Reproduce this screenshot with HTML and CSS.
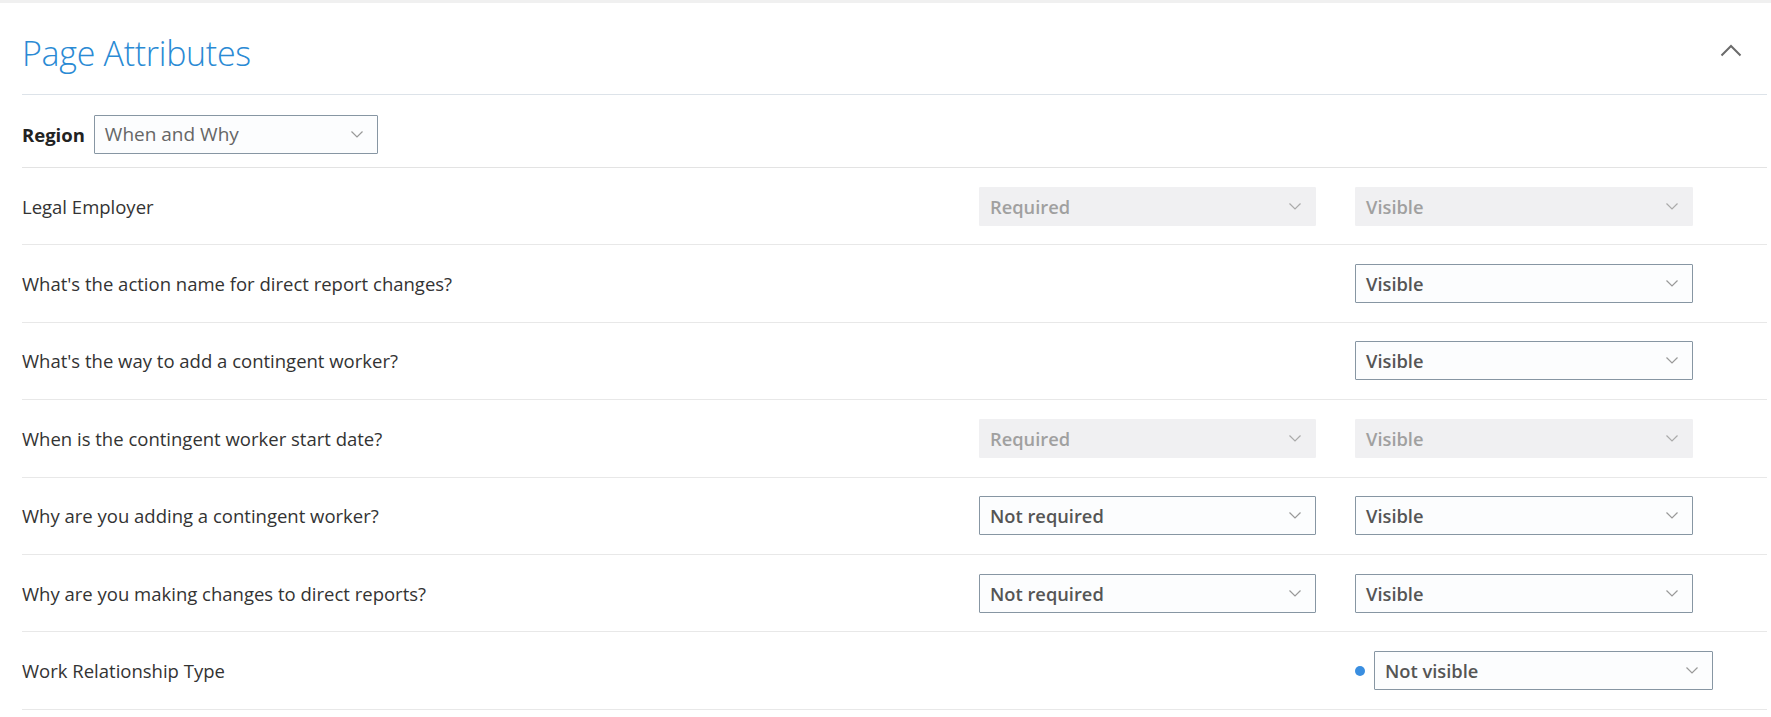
FILE: index.html
```html
<!DOCTYPE html>
<html lang="en">
<head>
  <meta charset="UTF-8">
  <meta name="viewport" content="width=device-width, initial-scale=1.0">
  <title>Page Attributes</title>
  <link rel="stylesheet" href="styles.css">
</head>
<body>
  <div class="topbar"></div>
  <div class="panel">
    <div class="panel-header">
      <h2>Page Attributes</h2>
      <button class="collapse" title="Collapse">
        <svg width="22" height="13" viewBox="0 0 22 13"><path d="M1.5 11.5 L11 2 L20.5 11.5" fill="none" stroke="#6b6b6b" stroke-width="2"/></svg>
      </button>
    </div>

    <div class="region-bar">
      <span class="region-label">Region</span>
      <div class="select region-select">
        <span>When and Why</span>
        <svg class="chev" width="12" height="7" viewBox="0 0 12 7"><path d="M0.5 0.5 L6 6 L11.5 0.5" fill="none" stroke="#999" stroke-width="1.2"/></svg>
      </div>
    </div>

    <div class="attr-row">
      <span class="attr-name">Legal Employer</span>
      <div class="select disabled"><span>Required</span><svg class="chev" width="12" height="7" viewBox="0 0 12 7"><path d="M0.5 0.5 L6 6 L11.5 0.5" fill="none" stroke="#aaa" stroke-width="1.2"/></svg></div>
      <div class="select disabled"><span>Visible</span><svg class="chev" width="12" height="7" viewBox="0 0 12 7"><path d="M0.5 0.5 L6 6 L11.5 0.5" fill="none" stroke="#aaa" stroke-width="1.2"/></svg></div>
    </div>

    <div class="attr-row">
      <span class="attr-name">What's the action name for direct report changes?</span>
      <div class="empty"></div>
      <div class="select"><span>Visible</span><svg class="chev" width="12" height="7" viewBox="0 0 12 7"><path d="M0.5 0.5 L6 6 L11.5 0.5" fill="none" stroke="#999" stroke-width="1.2"/></svg></div>
    </div>

    <div class="attr-row">
      <span class="attr-name">What's the way to add a contingent worker?</span>
      <div class="empty"></div>
      <div class="select"><span>Visible</span><svg class="chev" width="12" height="7" viewBox="0 0 12 7"><path d="M0.5 0.5 L6 6 L11.5 0.5" fill="none" stroke="#999" stroke-width="1.2"/></svg></div>
    </div>

    <div class="attr-row">
      <span class="attr-name">When is the contingent worker start date?</span>
      <div class="select disabled"><span>Required</span><svg class="chev" width="12" height="7" viewBox="0 0 12 7"><path d="M0.5 0.5 L6 6 L11.5 0.5" fill="none" stroke="#aaa" stroke-width="1.2"/></svg></div>
      <div class="select disabled"><span>Visible</span><svg class="chev" width="12" height="7" viewBox="0 0 12 7"><path d="M0.5 0.5 L6 6 L11.5 0.5" fill="none" stroke="#aaa" stroke-width="1.2"/></svg></div>
    </div>

    <div class="attr-row">
      <span class="attr-name">Why are you adding a contingent worker?</span>
      <div class="select"><span>Not required</span><svg class="chev" width="12" height="7" viewBox="0 0 12 7"><path d="M0.5 0.5 L6 6 L11.5 0.5" fill="none" stroke="#999" stroke-width="1.2"/></svg></div>
      <div class="select"><span>Visible</span><svg class="chev" width="12" height="7" viewBox="0 0 12 7"><path d="M0.5 0.5 L6 6 L11.5 0.5" fill="none" stroke="#999" stroke-width="1.2"/></svg></div>
    </div>

    <div class="attr-row">
      <span class="attr-name">Why are you making changes to direct reports?</span>
      <div class="select"><span>Not required</span><svg class="chev" width="12" height="7" viewBox="0 0 12 7"><path d="M0.5 0.5 L6 6 L11.5 0.5" fill="none" stroke="#999" stroke-width="1.2"/></svg></div>
      <div class="select"><span>Visible</span><svg class="chev" width="12" height="7" viewBox="0 0 12 7"><path d="M0.5 0.5 L6 6 L11.5 0.5" fill="none" stroke="#999" stroke-width="1.2"/></svg></div>
    </div>

    <div class="attr-row">
      <span class="attr-name">Work Relationship Type</span>
      <div class="empty"></div>
      <div class="changed">
        <span class="dot"></span>
        <div class="select"><span>Not visible</span><svg class="chev" width="12" height="7" viewBox="0 0 12 7"><path d="M0.5 0.5 L6 6 L11.5 0.5" fill="none" stroke="#999" stroke-width="1.2"/></svg></div>
      </div>
    </div>
  </div>
</body>
</html>
```

FILE: styles.css
```css
body {
  margin: 0;
  background: #fff;
  font-family: 'Open Sans', 'Noto Sans', sans-serif;
  color: #333;
}
.topbar {
  height: 3px;
  background: #f0f0f0;
}
.panel {
  padding: 0 4px 0 22px;
}
.panel-header {
  box-sizing: border-box;
  display: flex;
  align-items: center;
  justify-content: space-between;
  height: 92px;
  padding-top: 9px;
  border-bottom: 1px solid #dde3e9;
}
.panel-header h2 {
  margin: 0;
  font-weight: 300;
  font-size: 34px;
  color: #2a8ad4;
  letter-spacing: -0.3px;
}
.collapse {
  border: none;
  background: none;
  padding: 0;
  margin-right: 25px;
  margin-bottom: 6px;
  cursor: pointer;
  display: flex;
}
.region-bar {
  box-sizing: border-box;
  display: flex;
  align-items: center;
  gap: 9px;
  height: 73px;
  padding-top: 6px;
  border-bottom: 1px solid #e3e3e3;
}
.region-label {
  font-weight: 700;
  font-size: 18.5px;
  color: #222;
}
.select {
  box-sizing: border-box;
  display: flex;
  align-items: center;
  justify-content: space-between;
  height: 39px;
  padding: 0 14px 0 10px;
  border: 1.5px solid #8796a3;
  border-radius: 1px;
  background: #fcfdfe;
  font-size: 18.3px;
  font-weight: 600;
  color: #555;
}
.region-select {
  width: 284px;
  font-size: 19px;
  font-weight: 400;
  color: #666;
}
.select.disabled {
  border-color: #f0f0f2;
  background: #f0f0f2;
  color: #a0a0a0;
}
.attr-row {
  box-sizing: border-box;
  display: grid;
  grid-template-columns: 1fr 337px 338px;
  column-gap: 39px;
  align-items: center;
  height: 77.4px;
  padding-right: 74px;
  border-bottom: 1px solid #e8e8e8;
}
.attr-name {
  font-size: 18.5px;
  color: #333;
}
.changed {
  display: flex;
  align-items: center;
  gap: 9px;
  width: 358px;
}
.changed .select {
  width: 339px;
}
.dot {
  width: 10px;
  height: 10px;
  border-radius: 50%;
  background: #3a8ee0;
}
```
